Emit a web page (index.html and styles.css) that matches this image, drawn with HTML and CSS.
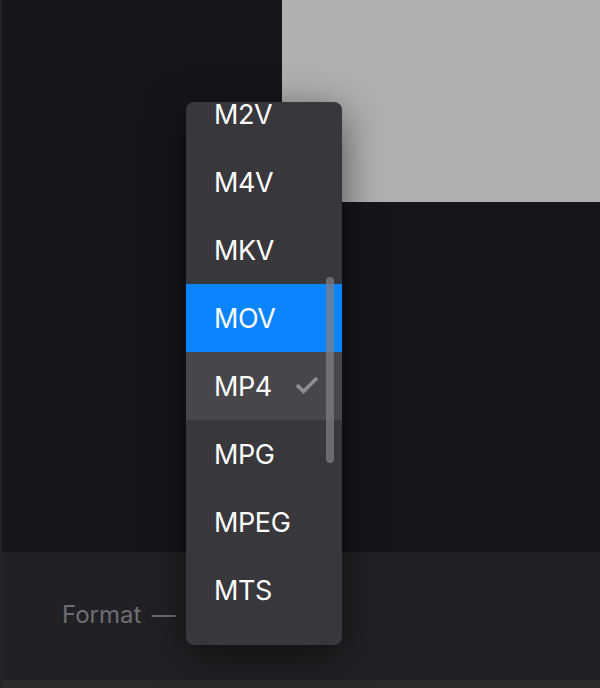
FILE: index.html
```html
<!DOCTYPE html>
<html>
<head>
    <title>Export</title>
    <link rel="stylesheet" href="styles.css">
</head>
<body>
    <div class="app">
        <div class="stage">
            <div class="preview"></div>
        </div>
        <div class="footer">
            <span class="label">Format</span>
            <span class="dash">—</span>
        </div>
        <div class="statusbar"></div>

        <div class="menu">
            <ul class="menu-list">
                <li class="item">M2V</li>
                <li class="item">M4V</li>
                <li class="item">MKV</li>
                <li class="item active">MOV</li>
                <li class="item selected">MP4
                    <svg class="check" width="24" height="18" viewBox="0 0 24 18">
                        <path d="M2 9 L8.5 15.5 L22 2" fill="none" stroke="#8e8d92" stroke-width="3.6"/>
                    </svg>
                </li>
                <li class="item">MPG</li>
                <li class="item">MPEG</li>
                <li class="item">MTS</li>
            </ul>
            <div class="scrollbar"></div>
        </div>
    </div>
</body>
</html>
```

FILE: styles.css
```css
* {
	box-sizing: border-box;
}

body {
	margin: 0;
	padding: 0;
	background-color: #16151a;
	font-family: Inter, "Noto Sans", sans-serif;
	overflow: hidden;
}

.app {
	position: relative;
	display: flex;
	flex-direction: column;
	width: 600px;
	height: 688px;
	border-left: 2px solid #232226;
}

.stage {
	height: 552px;
	display: flex;
	justify-content: flex-end;
	align-items: flex-start;
	background-color: #16151a;
}

.preview {
	width: 318px;
	height: 202px;
	background-color: #b0b0b0;
}

.footer {
	height: 128px;
	display: flex;
	align-items: center;
	gap: 10px;
	padding-left: 60px;
	padding-bottom: 4px;
	background-color: #212024;
	color: #6f6e73;
	font-size: 24px;
}

.statusbar {
	height: 8px;
	background-color: #2a2a2b;
}

.menu {
	position: absolute;
	left: 184px;
	top: 102px;
	width: 156px;
	height: 543px;
	background-color: #38373c;
	border-radius: 8px;
	overflow: hidden;
	box-shadow: 0 10px 40px rgba(0, 0, 0, 0.55);
}

.menu-list {
	list-style: none;
	margin: -22px 0 0 0;
	padding: 0;
}

.item {
	height: 68px;
	display: flex;
	align-items: center;
	justify-content: space-between;
	padding: 0 23px 0 28px;
	color: #ffffff;
	font-size: 27px;
	letter-spacing: -0.4px;
}

.item.active {
	background-color: #0a84ff;
}

.item.selected {
	background-color: #47464b;
}

.check {
	display: block;
	margin-top: -2px;
}

.scrollbar {
	position: absolute;
	right: 8px;
	top: 175px;
	width: 8px;
	height: 186px;
	border-radius: 4px;
	background-color: rgba(126, 126, 130, 0.75);
}
```
